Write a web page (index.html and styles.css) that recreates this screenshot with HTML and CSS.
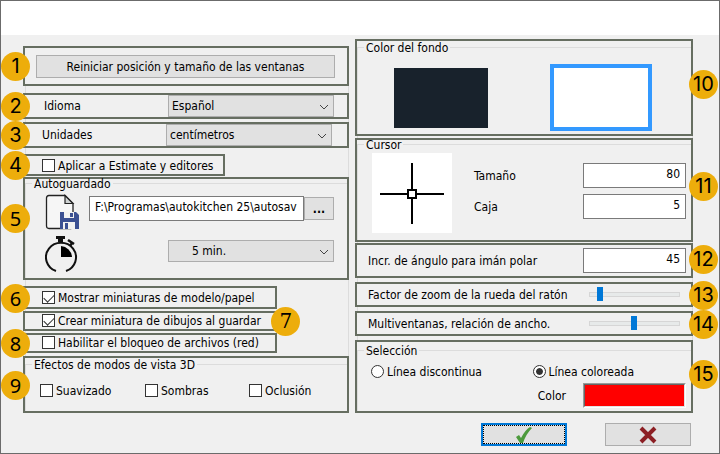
FILE: index.html
```html
<!DOCTYPE html>
<html lang="es">
<head>
    <meta charset="UTF-8">
    <meta name="viewport" content="width=device-width, initial-scale=1.0">
    <title>Preferencias</title>
    <link rel="stylesheet" href="styles.css">
</head>
<body>
    <form class="dialog">
        <header class="titlebar"></header>

        <main class="panels">
            <div class="column column-left">
                <section class="box box-reset">
                    <span class="badge">1</span>
                    <button type="button" class="btn btn-wide">Reiniciar posición y tamaño de las ventanas</button>
                </section>

                <section class="box box-language">
                    <span class="badge">2</span>
                    <label for="language">Idioma</label>
                    <div class="select">
                        <select id="language"><option>Español</option></select>
                        <svg viewBox="0 0 10 6"><path d="M1 1l4 4 4-4"/></svg>
                    </div>
                </section>

                <section class="box box-units">
                    <span class="badge">3</span>
                    <label for="units">Unidades</label>
                    <div class="select">
                        <select id="units"><option>centímetros</option></select>
                        <svg viewBox="0 0 10 6"><path d="M1 1l4 4 4-4"/></svg>
                    </div>
                </section>

                <section class="box box-check box-apply">
                    <span class="badge">4</span>
                    <label class="check"><input type="checkbox">Aplicar a Estimate y editores</label>
                </section>

                <section class="box box-autosave">
                    <span class="badge badge-raised badge-plain">5</span>
                    <fieldset>
                        <legend>Autoguardado</legend>
                        <div class="autosave-row">
                            <svg class="icon" viewBox="0 0 34 36">
                                <path d="M4 1.500H20L28 9.500V33Q28 34.500 26 34.500H4Q1.500 34.500 1.500 32V4Q1.500 1.500 4 1.500Z" fill="#f6f6f6" stroke="#222" stroke-width="1.300"/>
                                <path d="M20 1.500V9.500H28Z" fill="#cfd3d3" stroke="#222" stroke-width="1.200"/>
                                <path d="M15 18H31L34 21V35H15Z" fill="#3b5092"/>
                                <path d="M19 18H29V24H19Z" fill="#f2f2f2"/>
                                <path d="M25 19H28V23H25Z" fill="#3b5092"/>
                                <path d="M18 28H30V35H18Z" fill="#f2f2f2"/>
                                <path d="M20 29H23V35H20Z" fill="#3b5092"/>
                            </svg>
                            <input type="text" class="path" aria-label="Carpeta" value="F:\Programas\autokitchen 25\autosav">
                            <button type="button" class="btn btn-browse">...</button>
                        </div>
                        <div class="autosave-row">
                            <svg class="icon" viewBox="0 0 34 36">
                                <path d="M11 35A15 14.500 0 1 1 21 35" fill="none" stroke="#111" stroke-width="2"/>
                                <path d="M11 0H20V3H18V6H13V3H11Z" fill="#111"/>
                                <path d="M23 4l6 4M27 7l-2 3" stroke="#111" stroke-width="2.500"/>
                                <path d="M16 10A12 12 0 0 1 27 21H16Z" fill="#000"/>
                            </svg>
                            <div class="select">
                                <select class="interval" aria-label="Intervalo"><option>5 min.</option></select>
                                <svg viewBox="0 0 10 6"><path d="M1 1l4 4 4-4"/></svg>
                            </div>
                        </div>
                    </fieldset>
                </section>

                <section class="box box-check box-thumbs">
                    <span class="badge badge-plain">6</span>
                    <label class="check"><input type="checkbox" checked>Mostrar miniaturas de modelo/papel</label>
                </section>

                <section class="box box-check">
                    <span class="badge badge-serif">7</span>
                    <label class="check"><input type="checkbox" checked>Crear miniatura de dibujos al guardar</label>
                </section>

                <section class="box box-check">
                    <span class="badge badge-plain">8</span>
                    <label class="check"><input type="checkbox">Habilitar el bloqueo de archivos (red)</label>
                </section>

                <section class="box box-effects">
                    <span class="badge badge-plain">9</span>
                    <fieldset>
                        <legend>Efectos de modos de vista 3D</legend>
                        <div class="effects">
                            <label class="check"><input type="checkbox">Suavizado</label>
                            <label class="check"><input type="checkbox">Sombras</label>
                            <label class="check"><input type="checkbox">Oclusión</label>
                        </div>
                    </fieldset>
                </section>
            </div>

            <div class="column column-right">
                <section class="box box-background">
                    <span class="badge badge-high">10</span>
                    <fieldset>
                        <legend>Color del fondo</legend>
                        <div class="swatches">
                            <button type="button" class="swatch swatch-dark" aria-label="Oscuro"></button>
                            <button type="button" class="swatch swatch-light" aria-label="Claro"></button>
                        </div>
                    </fieldset>
                </section>

                <section class="box box-cursor">
                    <span class="badge badge-high">11</span>
                    <fieldset>
                        <legend>Cursor</legend>
                        <div class="cursor">
                            <svg class="crosshair" viewBox="0 0 80 80">
                                <path d="M40 10V71M8 41H72" stroke="#000" stroke-width="2"/>
                                <rect x="36" y="37" width="8" height="8" fill="#fff" stroke="#000" stroke-width="2"/>
                            </svg>
                            <div class="cursor-fields">
                                <label for="size">Tamaño</label>
                                <input type="text" id="size" class="number" value="80">
                                <label for="pickbox">Caja</label>
                                <input type="text" id="pickbox" class="number" value="5">
                            </div>
                        </div>
                    </fieldset>
                </section>

                <section class="box box-row box-angle">
                    <span class="badge badge-high">12</span>
                    <label for="angle">Incr. de ángulo para imán polar</label>
                    <input type="text" id="angle" class="number" value="45">
                </section>

                <section class="box box-row box-zoom">
                    <span class="badge">13</span>
                    <label for="zoom">Factor de zoom de la rueda del ratón</label>
                    <input type="range" id="zoom" min="0" max="100" value="9">
                </section>

                <section class="box box-row box-ratio">
                    <span class="badge">14</span>
                    <label for="ratio">Multiventanas, relación de ancho.</label>
                    <input type="range" id="ratio" min="0" max="100" value="49">
                </section>

                <section class="box box-selection">
                    <span class="badge badge-high">15</span>
                    <fieldset>
                        <legend>Selección</legend>
                        <div class="radios">
                            <label class="check"><input type="radio" name="line">Línea discontinua</label>
                            <label class="check"><input type="radio" name="line" checked>Línea coloreada</label>
                        </div>
                        <div class="line-color">
                            <label for="color">Color</label>
                            <input type="color" id="color" value="#ff0000">
                        </div>
                    </fieldset>
                </section>
            </div>
        </main>

        <footer class="actions">
            <button type="submit" class="btn btn-action btn-default" aria-label="Aceptar">
                <svg viewBox="0 0 18 18"><path d="M1 11L4 9L6 12Q10 4 15 1L17 2Q11 8 8 17H5Z" fill="#4c9a3c"/></svg>
            </button>
            <button type="button" class="btn btn-action" aria-label="Cancelar">
                <svg viewBox="0 0 18 18"><path d="M2 2L16 16M16 2L2 16" stroke="#8c1f24" stroke-width="4"/></svg>
            </button>
        </footer>
    </form>
</body>
</html>
```

FILE: styles.css
```css
* {
    box-sizing: border-box;
}
body {
    margin: 0;
    background-color: #f0f0f0;
    color: #000;
}
body,
button,
input,
select {
    font-family: Tahoma, "DejaVu Sans Condensed", "DejaVu Sans", sans-serif;
    font-size: 12px;
    line-height: 16px;
}
.dialog {
    display: flex;
    flex-direction: column;
    min-height: 100vh;
    border: 1px solid #6b6b6b;
}
.titlebar {
    height: 34px;
    background-color: #fff;
}
.panels {
    display: grid;
    grid-template-columns: 326fr 338fr;
    gap: 6px;
    padding: 4px 26px 0 22px;
}
.column {
    display: flex;
    flex-direction: column;
    gap: 2px;
    /* faint frame that shows between the boxes */
    background: linear-gradient(#dcdcdc, #dcdcdc) 2px 0 / 1px 100% no-repeat,
        linear-gradient(#dcdcdc, #dcdcdc) right 0 top 0 / 1px 100% no-repeat;
}
.column-left {
    margin-top: 7px;
}

/* Boxes */
.box {
    position: relative;
    border: 2px solid #666e61;
    background-color: #f0f0f0;
}
.box-reset {
    padding: 7px 12px 6px 11px;
}
.box-language,
.box-units {
    display: flex;
    align-items: center;
    justify-content: space-between;
    height: 26px;
}
.box-language {
    margin-top: 5px;
    padding: 0 13px 0 19px;
}
.box-units {
    margin-top: 1px;
    padding: 0 15px 0 17px;
}
.box-check {
    width: 78%;
    padding: 0 17px;
}
.box-apply {
    width: 62%;
    margin-top: 4px;
    padding-top: 2px;
}
.box-autosave {
    height: 103px;
    margin-top: -1px;
}
.box-thumbs {
    margin-top: 4px;
    padding: 2px 17px 1px;
}
.box-effects {
    height: 57px;
    margin-top: 1px;
    padding-top: 2px;
}
.box-background {
    height: 97px;
    padding-top: 2px;
}
.box-cursor {
    height: 104px;
}
.box-row {
    display: flex;
    align-items: center;
    justify-content: space-between;
    padding: 0 11px;
}
.box-angle {
    height: 35px;
    margin-top: -1px;
    padding-right: 5px;
}
.box-zoom,
.box-ratio {
    height: 25px;
    margin-top: 2px;
}
.box-selection {
    height: 73px;
    margin-top: 2px;
    padding-top: 4px;
}
fieldset {
    min-width: 0;
    height: 100%;
    margin: 0;
    padding: 0;
    border: 0 solid #dcdcdc;
    border-width: 1px 0 0 1px;
}
legend {
    margin-left: 6px;
    padding: 1px 2px 0;
    line-height: 8px;
}

/* Number badges */
.badge {
    position: absolute;
    z-index: 1;
    top: 50%;
    left: -24px;
    width: 29px;
    height: 29px;
    margin-top: -14px;
    border-radius: 50%;
    background-color: #edad0b;
    font: 20px/29px Inter, sans-serif;
    text-align: center;
}
.column-right .badge {
    left: auto;
    right: -27px;
}
.badge-raised {
    top: 39%;
}
.badge-high {
    top: 46%;
}
.badge-plain {
    font-family: "Noto Sans", sans-serif;
}
.box .badge-serif {
    left: auto;
    right: -25px;
    font-family: "DejaVu Serif", serif;
}

/* Controls */
.btn {
    height: 23px;
    padding: 0;
    border: 1px solid #adadad;
    background-color: #e1e1e1;
    color: #000;
}
.btn-wide {
    display: block;
    width: 100%;
}
.btn-browse {
    width: 30px;
    font-weight: bold;
}
.select {
    position: relative;
    width: 166px;
}
.select select {
    display: block;
    width: 100%;
    height: 22px;
    padding: 0 3px;
    border: 1px solid #adadad;
    border-radius: 0;
    background-color: #e1e1e1;
    color: #000;
    appearance: none;
}
.select .interval {
    padding-left: 23px;
}
.select svg {
    position: absolute;
    top: 9px;
    right: 5px;
    width: 10px;
    height: 6px;
    fill: none;
    stroke: #444;
    pointer-events: none;
}
input[type="text"] {
    height: 25px;
    padding: 0 5px 3px;
    border: 1px solid #7a7a7a;
    border-radius: 0;
    background-color: #fff;
}
.number {
    width: 103px;
    text-align: right;
}
.check {
    display: flex;
    align-items: center;
    gap: 3px;
    white-space: nowrap;
}
.check input {
    flex: none;
    width: 13px;
    height: 13px;
    margin: 0 0 2px;
    border: 1px solid #333;
    background-color: #fff;
    appearance: none;
}
.check input[type="checkbox"]:checked::after {
    content: "";
    display: block;
    width: 9px;
    height: 5px;
    margin: 2px 0 0 1px;
    border: solid #333;
    border-width: 0 0 1px 1px;
    transform: rotate(-45deg);
}
.check input[type="radio"] {
    border-radius: 50%;
}
.check input[type="radio"]:checked {
    background-color: #333;
    background-clip: content-box;
    padding: 2px;
    box-shadow: inset 0 0 0 2px #fff;
}
input[type="range"] {
    width: 91px;
    height: 14px;
    margin: 0;
    background: none;
    appearance: none;
}
input[type="range"]::-webkit-slider-runnable-track {
    height: 5px;
    border: 1px solid #d6d6d6;
    background-color: #e7eaea;
}
input[type="range"]::-webkit-slider-thumb {
    width: 6px;
    height: 14px;
    margin-top: -6px;
    background-color: #0078d7;
    appearance: none;
}
input[type="color"] {
    width: 103px;
    height: 25px;
    padding: 0;
    border: 1px solid;
    border-color: #999 #fff #fff #999;
    background: none;
}
input[type="color"]::-webkit-color-swatch-wrapper {
    padding: 0;
}
input[type="color"]::-webkit-color-swatch {
    border: 1px solid;
    border-color: #666 #e3e3e3 #e3e3e3 #666;
    border-radius: 0;
}

/* Autosave */
.autosave-row {
    display: flex;
    align-items: flex-start;
    justify-content: space-between;
    height: 36px;
    margin-top: 6px;
    padding: 0 13px 0 19px;
}
.icon {
    width: 34px;
    height: 36px;
}
.path {
    flex: 1;
    min-width: 0;
    margin: 2px 0 0 10px;
}
.btn-browse {
    margin-top: 3px;
}
.autosave-row .select {
    margin-top: 4px;
}

.effects {
    display: grid;
    grid-template-columns: 105fr 104fr 98fr;
    padding: 14px 0 0 14px;
}

/* Background colour */
.swatches {
    display: flex;
    align-items: center;
    justify-content: space-between;
    padding: 12px 39px 0 36px;
}
.swatch {
    width: 94px;
    height: 60px;
    padding: 0;
    border: 0;
}
.swatch-dark {
    background-color: #18222c;
}
.swatch-light {
    width: 102px;
    height: 67px;
    border: 4px solid #3399ff;
    background-color: #fff;
}

/* Cursor */
.cursor {
    display: flex;
    justify-content: space-between;
    padding: 4px 5px 0 14px;
}
.crosshair {
    width: 80px;
    height: 80px;
    background-color: #fff;
}
.cursor-fields {
    display: grid;
    grid-template-columns: 109px 103px;
    align-content: start;
    align-items: center;
    gap: 6px 0;
    padding-top: 10px;
}

/* Selection */
.radios {
    display: grid;
    grid-template-columns: 161fr 158fr;
    padding: 9px 0 0 13px;
}
.line-color {
    display: flex;
    align-items: center;
    justify-content: flex-end;
    gap: 17px;
    margin-top: 3px;
    padding-right: 5px;
}

/* Dialog buttons */
.actions {
    display: flex;
    justify-content: flex-end;
    gap: 38px;
    padding: 10px 28px 0;
}
.btn-action {
    width: 86px;
}
.btn-action svg {
    display: block;
    width: 18px;
    height: 18px;
    margin: 0 auto;
}
.btn-default {
    border: 2px solid #0078d7;
    outline: 1px dotted #000;
    outline-offset: -3px;
}
```
